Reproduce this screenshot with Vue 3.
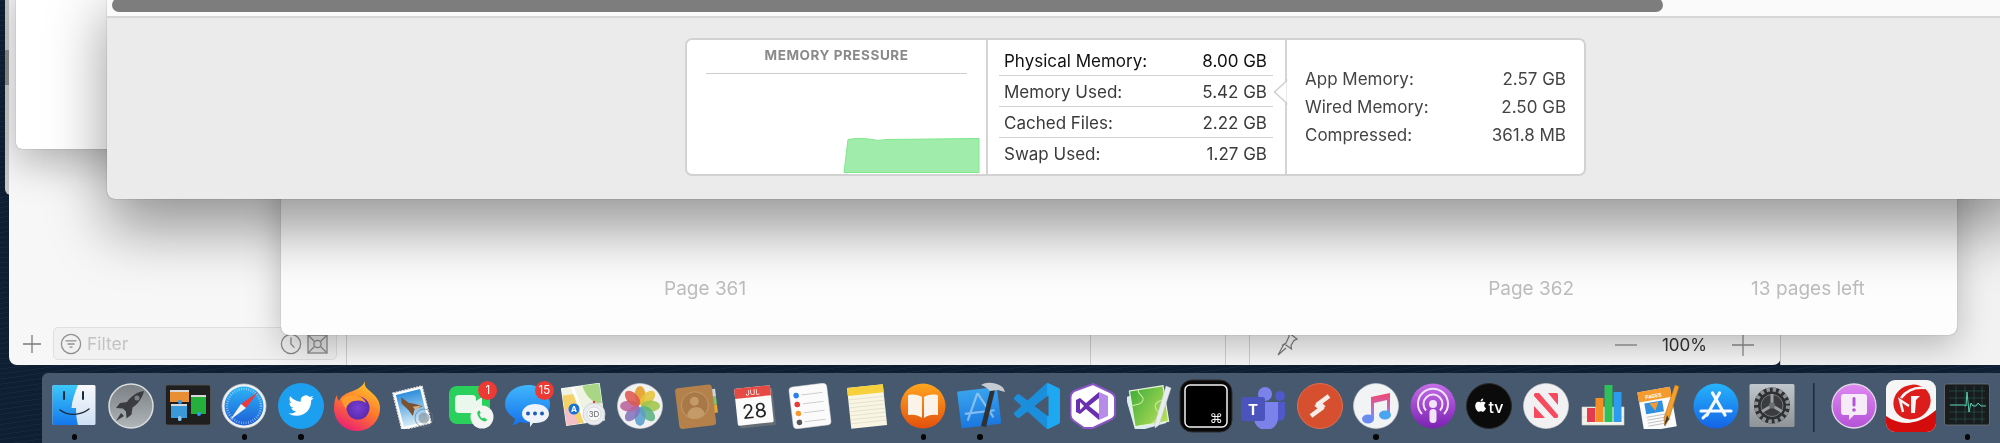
<script setup>
const physical = [
  { label: 'Physical Memory:', value: '8.00 GB', strong: true },
  { label: 'Memory Used:', value: '5.42 GB' },
  { label: 'Cached Files:', value: '2.22 GB' },
  { label: 'Swap Used:', value: '1.27 GB' }
];

const details = [
  { label: 'App Memory:', value: '2.57 GB' },
  { label: 'Wired Memory:', value: '2.50 GB' },
  { label: 'Compressed:', value: '361.8 MB' }
];

const photoPetals = [
  { angle: 0, color: '#f5a623' },
  { angle: 45, color: '#f4d03f' },
  { angle: 90, color: '#a8d24f' },
  { angle: 135, color: '#62bd8c' },
  { angle: 180, color: '#5fa8d8' },
  { angle: 225, color: '#8b7cc8' },
  { angle: 270, color: '#c56aa6' },
  { angle: 315, color: '#ea5f55' }
];
</script>

<template>
  <div class="desktop">
    <div class="win-far"></div>

    <!-- document window at the back -->
    <div class="win-main">
      <div class="main-footer">
        <div class="col col-side">
          <svg class="plus" width="18" height="18" viewBox="0 0 18 18"><path d="M9 0v18M0 9h18" stroke="#7c7c7c" stroke-width="1.3" fill="none"/></svg>
          <div class="filter">
            <svg width="22" height="22" viewBox="0 0 22 22" fill="none" stroke="#8e8e8e" stroke-width="1.3">
              <circle cx="11" cy="11" r="9.6"/>
              <path d="M5.5 7.8h11M7.5 11h7M9.5 14.2h3"/>
            </svg>
            <span class="filter-text">Filter</span>
            <svg class="filter-clock" width="22" height="22" viewBox="0 0 22 22" fill="none" stroke="#8a8a8a" stroke-width="1.3">
              <circle cx="11" cy="11" r="9.6"/>
              <path d="M11 4.5V11l3.4 3.6"/>
            </svg>
            <svg width="21" height="20" viewBox="0 0 21 20" fill="none" stroke="#8a8a8a" stroke-width="1.3">
              <rect x="1" y="1" width="19" height="18" fill="#e2e2e2"/>
              <circle cx="10.5" cy="10" r="3.6"/>
              <path d="M1 1l6.500 6.500M20 1l-6.500 6.500M1 19l6.500-6.500M20 19l-6.500-6.500"/>
            </svg>
          </div>
        </div>
        <div class="col col-a"></div>
        <div class="col col-b"></div>
        <div class="col col-c"></div>
        <div class="col col-d">
          <svg width="22" height="24" viewBox="0 0 22 24" fill="none" stroke="#7a7a7a" stroke-width="1.2">
            <path d="M13 1l8 6-3 1.500-3 5 .5 3.500-7-5-2.500 1.500 4-2.500 2.500-5.500L13 5z"/>
            <path d="M8 12l-6 11 8-7"/>
          </svg>
          <div class="zoom-tools">
            <svg width="22" height="22" viewBox="0 0 22 22"><path d="M0 11h22" stroke="#8a8a8a" stroke-width="1.3"/></svg>
            <span class="zoom-value">100%</span>
            <svg width="22" height="22" viewBox="0 0 22 22"><path d="M0 11h22M11 0v22" stroke="#8a8a8a" stroke-width="1.3" fill="none"/></svg>
          </div>
        </div>
      </div>
    </div>
    <div class="win-right"></div>

    <div class="win-small"></div>

    <!-- preview pages -->
    <div class="win-pages">
      <span class="page-label">Page 361</span>
      <span class="page-label page-two">Page 362</span>
      <span class="page-label page-left">13 pages left</span>
    </div>

    <!-- activity monitor -->
    <div class="win-front">
      <div class="scroll-track"><div class="scroll-thumb"></div></div>
      <div class="mem-panel">
        <div class="pressure">
          <div class="pressure-title">MEMORY PRESSURE</div>
          <svg class="pressure-graph" width="137" height="37" viewBox="0 0 137 37">
            <path d="M1 35.500L5 2.500Q15 .5 26 2q8 2.500 18 .5L136 1.500v34z" fill="#a0edab" stroke="#80e68d" stroke-width="1"/>
          </svg>
        </div>
        <div class="stats">
          <div v-for="row in physical" :key="row.label" class="stat-row" :class="{ strong: row.strong }">
            <span>{{ row.label }}</span>
            <span>{{ row.value }}</span>
          </div>
        </div>
        <div class="detail">
          <svg class="detail-arrow" width="15" height="26" viewBox="0 0 15 26">
            <path d="M13.500 0v2L1.500 13l12 11v2" fill="#fff" stroke="#cfcfcf" stroke-width="1.500"/>
          </svg>
          <div v-for="row in details" :key="row.label" class="detail-row">
            <span>{{ row.label }}</span>
            <span>{{ row.value }}</span>
          </div>
        </div>
      </div>
    </div>

    <!-- dock -->
    <div class="dock">
      <div class="dock-item running">
        <svg width="46" height="46" viewBox="0 0 46 46">
          <defs>
            <linearGradient id="finderL" x1="0" y1="0" x2="0" y2="1"><stop offset="0" stop-color="#3cc8fa"/><stop offset="1" stop-color="#1478ec"/></linearGradient>
            <linearGradient id="finderR" x1="0" y1="0" x2="0" y2="1"><stop offset="0" stop-color="#f8f9fb"/><stop offset="1" stop-color="#cfe0f3"/></linearGradient>
          </defs>
          <rect x="1.500" y="2" width="43" height="40" rx="1.500" fill="url(#finderR)"/>
          <path d="M3 2h24c-3 8-6 15-6.500 23H25c0 6 .5 12 2 17H3a1.500 1.500 0 0 1-1.500-1.500v-37A1.500 1.500 0 0 1 3 2z" fill="url(#finderL)"/>
          <path d="M13 9v7M32 9v7" stroke="#1c2b3a" stroke-width="2" stroke-linecap="round"/>
          <path d="M9 27c8 6 20 6 29-1" fill="none" stroke="#1c2b3a" stroke-width="1.400" stroke-linecap="round"/>
        </svg>
        <i class="dot"></i>
      </div>

      <div class="dock-item">
        <svg width="46" height="46" viewBox="0 0 46 46">
          <defs><linearGradient id="rocketBg" x1="0" y1="0" x2="0" y2="1"><stop offset="0" stop-color="#7a7f84"/><stop offset="1" stop-color="#b0b5b8"/></linearGradient></defs>
          <circle cx="23" cy="23" r="22" fill="url(#rocketBg)" stroke="#d9dcde" stroke-width="1.500"/>
          <path d="M36 8c-7 1-13 5-17 11l-7 1-4 5 7 .5 3 3 .5 7 5-4 1-7c6-4 10-10 11.500-16.500z" fill="#3a3c3f"/>
          <path d="M13 30l-5 8 8-5z" fill="#3a3c3f"/>
          <circle cx="29" cy="15" r="2.500" fill="#7d8185"/>
        </svg>
        <i class="dot off"></i>
      </div>

      <div class="dock-item">
        <svg width="46" height="46" viewBox="0 0 46 46">
          <rect x=".5" y="2" width="45" height="40" rx="2" fill="#1f1f1f" stroke="#555" stroke-width=".8"/>
          <rect x="5" y="8" width="19" height="11" fill="#e88e35"/><rect x="5" y="7" width="19" height="2" fill="#d8d8d8"/>
          <rect x="6" y="22" width="16" height="13" fill="#3a9ad9"/><rect x="6" y="21" width="16" height="2" fill="#d8d8d8"/>
          <rect x="26" y="13" width="15" height="18" fill="#25b03c"/><rect x="26" y="12" width="15" height="2" fill="#d8d8d8"/>
          <circle cx="15" cy="19" r="2" fill="#2e9bf0"/><rect x="13" y="33" width="3.500" height="5" rx="1.500" fill="#8cc4ee"/><circle cx="34" cy="31" r="2" fill="#2e9bf0"/>
        </svg>
        <i class="dot off"></i>
      </div>

      <div class="dock-item running">
        <svg width="46" height="46" viewBox="0 0 46 46">
          <defs><linearGradient id="safariBg" x1="0" y1="0" x2="0" y2="1"><stop offset="0" stop-color="#2cb3f5"/><stop offset="1" stop-color="#1d5fd8"/></linearGradient></defs>
          <circle cx="23" cy="23" r="22" fill="#eef0f2" stroke="#cfd2d5" stroke-width=".8"/>
          <circle cx="23" cy="23" r="19.500" fill="url(#safariBg)"/>
          <circle cx="23" cy="23" r="17" fill="none" stroke="#cfe6fa" stroke-width="2.500" stroke-dasharray="0.7 1.700" opacity=".75"/>
          <path d="M37 9L20 21l5 4z" fill="#ee3a3a"/>
          <path d="M9 37l11-16 5 4z" fill="#f2f2f2"/>
        </svg>
        <i class="dot"></i>
      </div>

      <div class="dock-item running">
        <svg width="46" height="46" viewBox="0 0 46 46">
          <circle cx="23" cy="23" r="23" fill="#1d9ff0"/>
          <g transform="translate(10.500 10) scale(1.050)" fill="#fff">
            <path d="M23.953 4.570a10 10 0 01-2.825.775 4.958 4.958 0 002.163-2.723c-.951.555-2.005.959-3.127 1.184a4.920 4.920 0 00-8.384 4.482C7.690 8.095 4.067 6.130 1.640 3.162a4.822 4.822 0 00-.666 2.475c0 1.710.870 3.213 2.188 4.096a4.904 4.904 0 01-2.228-.616v.060a4.923 4.923 0 003.946 4.827 4.996 4.996 0 01-2.212.085 4.936 4.936 0 004.604 3.417 9.867 9.867 0 01-6.102 2.105c-.390 0-.779-.023-1.170-.067a13.995 13.995 0 007.557 2.209c9.053 0 13.998-7.496 13.998-13.985 0-.210 0-.420-.015-.630A9.935 9.935 0 0024 4.590z"/>
          </g>
        </svg>
        <i class="dot"></i>
      </div>

      <div class="dock-item">
        <svg width="46" height="46" viewBox="0 0 46 46" style="overflow:visible">
          <defs>
            <linearGradient id="foxBg" x1=".8" y1="0" x2=".3" y2="1"><stop offset="0" stop-color="#ffd02e"/><stop offset=".5" stop-color="#ff7a2a"/><stop offset="1" stop-color="#ea1f74"/></linearGradient>
            <radialGradient id="foxCore"><stop offset="0" stop-color="#7b3fd0"/><stop offset="1" stop-color="#5a2bb0"/></radialGradient>
          </defs>
          <path d="M31-2c-1 5 1 7 6 11 6 5 9 10 9 16 0 13-10 23-23 23S0 38 0 25C0 20 1 15 3 12c0 3 1 5 2 6 2-5 6-7 11-9 6-2 13-5 15-11z" fill="url(#foxBg)"/>
          <circle cx="24" cy="25" r="11.500" fill="url(#foxCore)"/>
          <path d="M7 16c5-4 11-5 17-3 4 1 7 4 8 7-4-3-8-3-12-2-4 1-7 4-8 8-2-3-4-6-5-10z" fill="#ff9a2e"/>
        </svg>
        <i class="dot off"></i>
      </div>

      <div class="dock-item">
        <svg width="46" height="46" viewBox="0 0 46 46">
          <defs><linearGradient id="sky" x1="0" y1="0" x2="0" y2="1"><stop offset="0" stop-color="#2f8fdc"/><stop offset="1" stop-color="#d6ebf5"/></linearGradient></defs>
          <g transform="rotate(-14 21 25)">
            <rect x="6" y="6" width="30" height="38" fill="#fff" stroke="#e6e6e6" stroke-width="1.500" stroke-dasharray="2 1"/>
            <rect x="8.500" y="8.500" width="25" height="33" fill="url(#sky)"/>
            <path d="M13 12l6 7 6 3 7 4-9 1-3 6-3-7-5-8z" fill="#7a5232"/>
            <path d="M22 24l9 1-7 3z" fill="#d7b082"/>
          </g>
          <circle cx="33" cy="35" r="9" fill="none" stroke="#6a7480" stroke-width=".8" opacity=".8"/>
          <circle cx="33" cy="35" r="5.500" fill="#7f8a95" opacity=".6"/>
        </svg>
        <i class="dot off"></i>
      </div>

      <div class="dock-item">
        <svg width="46" height="46" viewBox="0 0 46 46">
          <rect x="1" y="3" width="41" height="38" rx="8" fill="#2ad05c"/>
          <rect x="7" y="12" width="21" height="18" rx="4" fill="#e9f7ed"/>
          <path d="M28 18l6-4v14l-6-4z" fill="#e9f7ed"/>
          <circle cx="34" cy="34" r="11.500" fill="#f3f5f3"/>
          <path d="M30 28c-1 1-1 3 0 5 1.500 3 4 5 6.500 5.500 1.500 0 2.500-1 2.500-2l-3-2-1.500 1c-1.500-1-2.500-2.500-3-4l1.200-1.500-1-2.500z" fill="#2ad05c"/>
        </svg>
        <span class="badge">1</span>
        <i class="dot off"></i>
      </div>

      <div class="dock-item">
        <svg width="46" height="46" viewBox="0 0 46 46">
          <defs><linearGradient id="msgBg" x1="0" y1="0" x2="0" y2="1"><stop offset="0" stop-color="#3fb6fb"/><stop offset="1" stop-color="#1673ee"/></linearGradient></defs>
          <path d="M24 2c12 0 22 8 22 19 0 11-10 19-22 19-3 0-6-.5-8-1.500-2 2-5 3.500-8 3.500 2-1.500 3-4 3-6.500C5 32 1 27 1 21 1 10 12 2 24 2z" fill="url(#msgBg)"/>
          <path d="M31 21c8 0 14 4 14 10 0 5-6 9-13 9l-3 0-3 4v-5c-4-1-8-4-8-8 0-6 6-10 13-10z" fill="#eef3f9"/>
          <circle cx="24" cy="30.500" r="2" fill="#1d5bb8"/><circle cx="31" cy="30.500" r="2" fill="#1d5bb8"/><circle cx="38" cy="30.500" r="2" fill="#1d5bb8"/>
        </svg>
        <span class="badge">15</span>
        <i class="dot off"></i>
      </div>

      <div class="dock-item">
        <svg width="46" height="46" viewBox="0 0 46 46">
          <g transform="rotate(-8 21 22)">
            <rect x="3" y="3" width="38" height="37" fill="#eff4e2" stroke="#f8f8f8" stroke-width="1.200"/>
            <path d="M3 10h12l6 30H3z" fill="#f5d16a"/>
            <path d="M3 24h8l4 16H3z" fill="#f3c0c8"/>
            <path d="M24 3h17v20c-8 0-15-8-17-20z" fill="#a9d684"/>
            <path d="M14 3l8 37" stroke="#fff" stroke-width="3"/>
          </g>
          <circle cx="13" cy="26" r="5.500" fill="#1671d8"/>
          <text x="13" y="29" text-anchor="middle" class="map-a">A</text>
          <circle cx="33" cy="31" r="11" fill="#eaecef" stroke="#c8ccd1" stroke-width=".8"/>
          <circle cx="33" cy="31" r="7" fill="#f7f8f9" stroke="#bbb" stroke-width=".4"/>
          <text x="33" y="34" text-anchor="middle" class="map-3d">3D</text>
          <circle cx="33" cy="19" r="1.200" fill="#e63a3a"/>
        </svg>
        <i class="dot off"></i>
      </div>

      <div class="dock-item">
        <svg width="46" height="46" viewBox="0 0 46 46">
          <circle cx="23" cy="23" r="22.500" fill="#f1f1f1" stroke="#d8d8d8" stroke-width=".6"/>
          <g style="mix-blend-mode:multiply">
            <ellipse v-for="petal in photoPetals" :key="petal.angle" cx="23" cy="12.500" rx="5.500" ry="9.500" :fill="petal.color" opacity=".88" :transform="`rotate(${petal.angle} 23 23)`"/>
          </g>
        </svg>
        <i class="dot off"></i>
      </div>

      <div class="dock-item">
        <svg width="46" height="46" viewBox="0 0 46 46">
          <g transform="rotate(-7 23 23)">
            <rect x="39" y="8" width="4" height="8" fill="#d0d6da"/><rect x="39" y="16" width="4" height="8" fill="#7fc36a"/><rect x="39" y="24" width="4" height="8" fill="#e8a635"/>
            <rect x="3" y="3" width="37" height="41" rx="3" fill="#b4814a"/>
            <circle cx="21" cy="22" r="13.500" fill="#a87846" stroke="#c49a69" stroke-width=".9"/>
            <circle cx="21" cy="18" r="4.500" fill="#c49a69"/>
            <path d="M12 32c1-6 5-8 9-8s8 2 9 8a13 13 0 0 1-18 0z" fill="#c49a69"/>
          </g>
        </svg>
        <i class="dot off"></i>
      </div>

      <div class="dock-item">
        <svg width="46" height="46" viewBox="0 0 46 46">
          <g transform="rotate(-6 23 23)">
            <rect x="7" y="7" width="36" height="37" rx="1.500" fill="#666e75"/>
            <rect x="5" y="4" width="36" height="37" rx="1.500" fill="#fbfbfb"/>
            <path d="M5 5.500A1.500 1.500 0 0 1 6.500 4h33A1.500 1.500 0 0 1 41 5.500V14H5z" fill="#e64a45"/>
            <text x="23" y="12" text-anchor="middle" class="cal-month">JUL</text>
            <text x="23" y="35" text-anchor="middle" class="cal-day">28</text>
          </g>
        </svg>
        <i class="dot off"></i>
      </div>

      <div class="dock-item">
        <svg width="46" height="46" viewBox="0 0 46 46">
          <g transform="rotate(-7 23 23)">
            <rect x="4" y="2" width="38" height="42" rx="4" fill="#fbfbfb" stroke="#d5d5d5" stroke-width=".5"/>
            <circle cx="10.500" cy="11" r="2.800" fill="#2e7fe8"/><circle cx="10.500" cy="20" r="2.800" fill="#e93a36"/><circle cx="10.500" cy="29" r="2.800" fill="#f6992b"/><circle cx="10.500" cy="38" r="2.800" fill="#55595e"/>
            <path d="M16 11h21M16 20h21M16 29h21M16 38h21" stroke="#bdbdbd" stroke-width=".7"/>
          </g>
        </svg>
        <i class="dot off"></i>
      </div>

      <div class="dock-item">
        <svg width="46" height="46" viewBox="0 0 46 46">
          <g transform="rotate(-6 23 23)">
            <rect x="5" y="3" width="36" height="41" fill="#f9f5e3"/>
            <rect x="5" y="3" width="36" height="8" fill="#f6d13c"/>
            <path d="M5 15h36M5 19h36M5 23h36M5 27h36M5 31h36M5 35h36M5 39h36" stroke="#d9d5c4" stroke-width=".6"/>
          </g>
        </svg>
        <i class="dot off"></i>
      </div>

      <div class="dock-item running">
        <svg width="46" height="46" viewBox="0 0 46 46">
          <defs><linearGradient id="booksBg" x1="0" y1="0" x2="0" y2="1"><stop offset="0" stop-color="#ffa51f"/><stop offset="1" stop-color="#e3500e"/></linearGradient></defs>
          <circle cx="23" cy="23" r="22.500" fill="url(#booksBg)"/>
          <path d="M22 14c-3-2-8-3-13-2-.5 0-1 .5-1 1v18c0 1 .5 1 1 1 5-.5 9 0 13 3zM24 14c3-2 8-3 13-2 .5 0 1 .5 1 1v18c0 1-.5 1-1 1-5-.5-9 0-13 3z" fill="#fbf3e9"/>
        </svg>
        <i class="dot"></i>
      </div>

      <div class="dock-item running">
        <svg width="46" height="46" viewBox="0 0 46 46" style="overflow:visible">
          <defs><linearGradient id="xcodeBg" x1="0" y1="0" x2="0" y2="1"><stop offset="0" stop-color="#39a3ee"/><stop offset="1" stop-color="#1a78df"/></linearGradient></defs>
          <g transform="rotate(-7 23 23)">
            <rect x="2" y="6" width="40" height="37" rx="1" fill="url(#xcodeBg)"/>
            <path d="M22 10L9 36M22 10l13 26M7 29h30" fill="none" stroke="#a7d3f7" stroke-width="2.200" opacity=".7"/>
          </g>
          <path d="M34 4l-10 39 5 1 9-37z" fill="#2e3236"/>
          <path d="M24 2c5-3 13-3 20 1 2 1 3 3 4 6l-7-2-8 1-2-2c-2-2-4-3-7-4z" fill="#c5cbd1"/>
        </svg>
        <i class="dot"></i>
      </div>

      <div class="dock-item">
        <svg width="46" height="46" viewBox="0 0 24 24">
          <path d="M23.150 2.587L18.210.21a1.494 1.494 0 0 0-1.705.29l-9.460 8.630-4.120-3.128a.999.999 0 0 0-1.276.057L.327 7.261A1 1 0 0 0 .326 8.740L3.899 12 .326 15.260a1 1 0 0 0 .001 1.479L1.650 17.940a.999.999 0 0 0 1.276.057l4.120-3.128 9.460 8.630a1.492 1.492 0 0 0 1.704.290l4.942-2.377A1.500 1.500 0 0 0 24 20.060V3.939a1.500 1.500 0 0 0-.850-1.352zm-5.146 14.861L10.826 12l7.178-5.448v10.896z" fill="#1c8fdc"/>
          <path d="M17.300 .15a1.500 1.500 0 0 1 .910.060l4.940 2.377A1.500 1.500 0 0 1 24 3.939v16.120a1.500 1.500 0 0 1-.850 1.352l-4.940 2.377a1.500 1.500 0 0 1-.910.060z M18 17.450V6.550" fill="#1fa8f2"/>
          <path d="M18.004 6.552v10.896L10.826 12z" fill="#47596f"/>
        </svg>
        <i class="dot off"></i>
      </div>

      <div class="dock-item">
        <svg width="46" height="46" viewBox="0 0 46 46">
          <path d="M23 1l17 8c3 1.500 5 3 5 6v16c0 3-2 4.500-5 6l-17 8H14L4 38c-2-1.500-3.500-3-3.500-6V14c0-3 1.500-4.500 3.500-6z" fill="#fff" stroke="#8a55c4" stroke-width="2"/>
          <path d="M29 9l9 4v20l-9 4z" fill="#b78ce8"/>
          <path d="M29 9v28l-13-11-6 5-4-2V17l4-2 6 5z" fill="#6a2fb0"/>
          <path d="M29 15v16l-10-8zM10 19v8l4-4z" fill="#fff"/>
        </svg>
        <i class="dot off"></i>
      </div>

      <div class="dock-item">
        <svg width="46" height="46" viewBox="0 0 46 46">
          <defs><linearGradient id="codaBg" x1="0" y1="0" x2="1" y2="1"><stop offset="0" stop-color="#3fae3a"/><stop offset="1" stop-color="#bde05a"/></linearGradient></defs>
          <rect x="3" y="9" width="32" height="36" fill="#dcecf2" transform="rotate(-16 19 27)"/>
          <g transform="rotate(-9 23 23)">
            <rect x="5" y="5" width="34" height="36" fill="url(#codaBg)" stroke="#e9f3d7" stroke-width="1.200"/>
            <path d="M14 5c-2 5 5 6 3 11s-9 3-12 4M39 20c-6-2-11 1-11 5s5 6 2 10-6 3-8 6" fill="none" stroke="#d0eb9d" stroke-width="1"/>
          </g>
          <path d="M39 3l5 2-12 37-4 3 0-5z" fill="#e8ecee" stroke="#c4c9cc" stroke-width=".5"/>
        </svg>
        <i class="dot off"></i>
      </div>

      <div class="dock-item">
        <svg width="54" height="54" viewBox="0 0 54 54" style="margin:-4px">
          <rect x="1" y="1" width="52" height="52" rx="12" fill="#080808" stroke="#2f2f2f"/>
          <rect x="6" y="6" width="42" height="42" rx="5" fill="#000" stroke="#f3f3f3" stroke-width="1.500"/>
          <text x="37" y="44" text-anchor="middle" class="key-cmd">⌘</text>
        </svg>
        <i class="dot off"></i>
      </div>

      <div class="dock-item">
        <svg width="46" height="46" viewBox="0 0 46 46">
          <circle cx="25" cy="11" r="7" fill="#7b83eb"/>
          <circle cx="40" cy="13" r="5" fill="#5059c9"/>
          <path d="M33 19h12v13a6 6 0 0 1-12 0z" fill="#5059c9"/>
          <path d="M14 19h24v16a12 12 0 0 1-24 0z" fill="#7b83eb"/>
          <rect x="1" y="14" width="24" height="24" rx="2.500" fill="#4b53bc"/>
          <text x="13" y="32" text-anchor="middle" class="teams-t">T</text>
        </svg>
        <i class="dot off"></i>
      </div>

      <div class="dock-item">
        <svg width="46" height="46" viewBox="0 0 46 46" fill="none">
          <circle cx="23" cy="23" r="22.500" fill="#d6502f" stroke="#e16d4e" stroke-width="1"/>
          <path d="M32 13l-10 7.500 5 4.500" stroke="#f6ece8" stroke-width="4.500"/>
          <path d="M14 33l10-7.500-5-4.500" stroke="#f6ece8" stroke-width="4.500"/>
        </svg>
        <i class="dot off"></i>
      </div>

      <div class="dock-item running">
        <svg width="46" height="46" viewBox="0 0 46 46">
          <defs><linearGradient id="noteG" x1="0" y1="0" x2="0" y2="1"><stop offset="0" stop-color="#f4456a"/><stop offset=".6" stop-color="#c16bc8"/><stop offset="1" stop-color="#5a9df5"/></linearGradient></defs>
          <circle cx="23" cy="23" r="22.500" fill="#f2f3f5" stroke="#d4d5d9" stroke-width=".6"/>
          <path d="M18 14l19-4v22h-3V17l-13 3v16h-3z" fill="url(#noteG)"/>
          <ellipse cx="15" cy="36" rx="6" ry="4.500" fill="#6a8cf0"/>
          <ellipse cx="32" cy="32" rx="6" ry="4.500" fill="#4aa5f0"/>
        </svg>
        <i class="dot"></i>
      </div>

      <div class="dock-item">
        <svg width="46" height="46" viewBox="0 0 46 46" fill="none">
          <defs><linearGradient id="podBg" x1="0" y1="0" x2="0" y2="1"><stop offset="0" stop-color="#c46ee8"/><stop offset="1" stop-color="#7b22b2"/></linearGradient></defs>
          <circle cx="23" cy="23" r="22.500" fill="url(#podBg)"/>
          <path d="M12 31a15 15 0 1 1 22 0" stroke="#f3e3f9" stroke-width="2"/>
          <path d="M16 27.500a9.500 9.500 0 1 1 14 0" stroke="#f3e3f9" stroke-width="2"/>
          <circle cx="23" cy="21" r="4" fill="#f3e3f9"/>
          <rect x="19.500" y="26" width="7" height="14" rx="3.500" fill="#f3e3f9"/>
        </svg>
        <i class="dot off"></i>
      </div>

      <div class="dock-item">
        <svg width="46" height="46" viewBox="0 0 46 46">
          <circle cx="23" cy="23" r="22.500" fill="#0b0b0b" stroke="#2a2a2a"/>
          <g transform="translate(8 15.500) scale(.55)" fill="#fff">
            <path d="M12.152 6.896c-.948 0-2.415-1.078-3.960-1.040-2.040.027-3.910 1.183-4.961 3.014-2.117 3.675-.546 9.103 1.519 12.090 1.013 1.454 2.208 3.090 3.792 3.039 1.520-.065 2.090-.987 3.935-.987 1.831 0 2.350.987 3.960.948 1.637-.026 2.676-1.480 3.676-2.948 1.156-1.688 1.636-3.325 1.662-3.415-.039-.013-3.182-1.221-3.220-4.857-.026-3.040 2.480-4.494 2.597-4.559-1.429-2.090-3.623-2.324-4.390-2.376-2-.156-3.675 1.090-4.610 1.090zM15.530 3.830c.843-1.012 1.400-2.427 1.245-3.830-1.207.052-2.662.805-3.532 1.818-.780.896-1.454 2.338-1.273 3.714 1.338.104 2.715-.688 3.559-1.701"/>
          </g>
          <text x="30" y="29.500" text-anchor="middle" class="tv-text">tv</text>
        </svg>
        <i class="dot off"></i>
      </div>

      <div class="dock-item">
        <svg width="46" height="46" viewBox="0 0 46 46">
          <circle cx="23" cy="23" r="22.500" fill="#f1f1f3" stroke="#d8d8da" stroke-width=".6"/>
          <rect x="11" y="10" width="24" height="25" rx="1.500" fill="#f64a5e"/>
          <path d="M11 13l20 22h-9L11 23zM16 10h9l10 12v10z" fill="#f1f1f3"/>
        </svg>
        <i class="dot off"></i>
      </div>

      <div class="dock-item">
        <svg width="46" height="46" viewBox="0 0 46 46">
          <path d="M2 24h42v18H2z" fill="#f2f1ea" stroke="#d2d2ca" stroke-width=".6"/>
          <path d="M2 34h42M9 24v18" stroke="#c9c9c2" stroke-width=".5"/>
          <rect x="7" y="25" width="8" height="14" fill="#e83a4f"/>
          <rect x="15.500" y="15" width="8" height="24" fill="#f58d25"/>
          <rect x="24.500" y="2" width="8" height="37" fill="#2fc05a"/>
          <rect x="33.500" y="9" width="8" height="30" fill="#2b9cf0"/>
        </svg>
        <i class="dot off"></i>
      </div>

      <div class="dock-item">
        <svg width="46" height="46" viewBox="0 0 46 46">
          <g transform="rotate(-10 23 23)">
            <rect x="4" y="6" width="33" height="40" fill="#fbfbfb"/>
            <rect x="4" y="6" width="33" height="10" fill="#f59a2c"/>
            <text x="11" y="14" class="pages-text">PAGES</text>
            <rect x="9" y="18" width="18" height="11" fill="#2f8fe0"/>
            <path d="M14 19h9l-4.500 8z" fill="#f59a2c"/>
            <path d="M9 32h23M9 35h23M9 38h23M9 41h16" stroke="#b9b9b9" stroke-width=".8"/>
          </g>
          <path d="M39 2l4 1.500L33 36l-4 7-1-8z" fill="#f3a02f" stroke="#b26f14" stroke-width=".6"/>
          <path d="M31 32l-3 11 5-7z" fill="#3c3c3c"/>
        </svg>
        <i class="dot off"></i>
      </div>

      <div class="dock-item">
        <svg width="46" height="46" viewBox="0 0 46 46">
          <defs><linearGradient id="storeBg" x1="0" y1="0" x2="0" y2="1"><stop offset="0" stop-color="#26b4fb"/><stop offset="1" stop-color="#1463e6"/></linearGradient></defs>
          <circle cx="23" cy="23" r="22.500" fill="url(#storeBg)"/>
          <path d="M26.500 10L14 32M19.500 10L32 32M8 28h30" stroke="#f5f9ff" stroke-width="3.200" stroke-linecap="round" fill="none"/>
          <path d="M10 35l3-3" stroke="#f5f9ff" stroke-width="3" stroke-linecap="round"/>
        </svg>
        <i class="dot off"></i>
      </div>

      <div class="dock-item">
        <svg width="46" height="46" viewBox="0 0 46 46" fill="none">
          <defs><linearGradient id="prefBg" x1="0" y1="0" x2="0" y2="1"><stop offset="0" stop-color="#c0c7cc"/><stop offset="1" stop-color="#8e9498"/></linearGradient></defs>
          <rect x=".5" y="1" width="45" height="43" rx="1.500" fill="url(#prefBg)"/>
          <circle cx="23" cy="22.500" r="18" fill="#2e3033"/>
          <circle cx="23" cy="22.500" r="16" stroke="#8e9295" stroke-width="4" stroke-dasharray="3.500 2.800"/>
          <circle cx="23" cy="22.500" r="11" fill="#3a3c3f" stroke="#777" stroke-width="1"/>
          <path d="M23 22.500V11M23 22.500l-10 6M23 22.500l10 6" stroke="#9da0a3" stroke-width="3"/>
          <circle cx="23" cy="22.500" r="3" fill="#6d7073"/>
        </svg>
        <i class="dot off"></i>
      </div>

      <div class="dock-sep"></div>

      <div class="dock-item">
        <svg width="46" height="46" viewBox="0 0 46 46">
          <defs><linearGradient id="fbBg" x1="0" y1="0" x2="0" y2="1"><stop offset="0" stop-color="#de88f0"/><stop offset="1" stop-color="#b452d8"/></linearGradient></defs>
          <circle cx="23" cy="23" r="22" fill="url(#fbBg)" stroke="#ded6e3" stroke-width="1.300"/>
          <path d="M13 11h20a3 3 0 0 1 3 3v15a3 3 0 0 1-3 3H23l-5 5v-5h-5a3 3 0 0 1-3-3V14a3 3 0 0 1 3-3z" fill="#f6ecf9"/>
          <rect x="21.500" y="14" width="3" height="9.500" rx="1.500" fill="#b452d8"/>
          <circle cx="23" cy="27" r="1.800" fill="#b452d8"/>
        </svg>
        <i class="dot off"></i>
      </div>

      <div class="dock-item">
        <svg width="50" height="52" viewBox="0 0 50 52" style="margin:-3px -2px">
          <rect x="0" y="0" width="50" height="52" rx="9" fill="#f6f6f6"/>
          <path d="M0 36c14 10 32 10 50-6v13a9 9 0 0 1-9 9H9a9 9 0 0 1-9-9z" fill="#d40c0c"/>
          <ellipse cx="26" cy="22" rx="19" ry="17" fill="#dd1c1c" transform="rotate(-25 26 22)"/>
          <path d="M15 18c6-8 14-11 24-10M17 32l-3-12 9 6" fill="none" stroke="#f6f6f6" stroke-width="2.500"/>
          <path d="M25 16h9l-4 4-1 13h-4z" fill="#f6f6f6"/>
        </svg>
        <i class="dot off"></i>
      </div>

      <div class="dock-item running">
        <svg width="46" height="46" viewBox="0 0 46 46" fill="none">
          <rect x=".5" y="1" width="45" height="41" rx="2" fill="#181c1d" stroke="#6e7476" stroke-width=".8"/>
          <path d="M5 8h36M5 15h36M5 22h36M5 29h36M5 36h36M12 3v37M21 3v37M30 3v37M38 3v37" stroke="#2e6a60" stroke-width=".5"/>
          <path d="M6 22h14l2 1 1-14 2 20 2-9 2 3h3l2-3 3 3h5" stroke="#5fdcbe" stroke-width=".9"/>
        </svg>
        <i class="dot"></i>
      </div>

      <div class="dock-item dock-cut">
        <div class="cut-tile"></div>
      </div>
    </div>
  </div>
</template>

<style scoped>
.desktop {
  position: relative;
  width: 2000px;
  height: 443px;
  overflow: hidden;
  background:
    repeating-linear-gradient(172deg, rgba(120, 150, 185, 0.07) 0 1px, transparent 1px 5px),
    #0e1e33;
  font-family: Inter, "Liberation Sans", sans-serif;
}

/* windows on the desktop */
.win-far {
  position: absolute;
  left: 5px;
  top: -20px;
  width: 60px;
  height: 215px;
  border-radius: 6px;
  background: linear-gradient(#c9c9c9 0 70px, #8c8c8c 70px 105px, #c9c9c9 105px);
}

.win-main {
  position: absolute;
  left: 9px;
  top: -20px;
  width: 1772px;
  height: 385px;
  display: flex;
  flex-direction: column;
  justify-content: flex-end;
  background: #f7f7f7;
  border-radius: 8px;
}

.win-right {
  position: absolute;
  left: 1781px;
  top: -20px;
  right: 0;
  height: 385px;
  background: #f2f2f2;
}

.main-footer {
  display: flex;
  height: 43px;
}

.col {
  box-sizing: border-box;
  height: 100%;
}

.col-side {
  width: 337px;
  display: flex;
  align-items: center;
  padding: 5px 9px 5px 14px;
  gap: 12px;
}

.plus { flex: none; }

.filter {
  flex: 1;
  height: 33px;
  box-sizing: border-box;
  display: flex;
  align-items: center;
  padding: 0 8px 0 6px;
  border: 1.5px solid #dfdfdf;
  border-radius: 5px;
  background: #f1f1f1;
}

.filter-text {
  margin-left: 5px;
  font-size: 17.5px;
  color: #c3c3c3;
}

.filter-clock {
  margin-left: auto;
  margin-right: 5px;
}

.col-a,
.col-b,
.col-c,
.col-d {
  border-left: 1px solid #cfcfcf;
}

.col-a { width: 744px; }
.col-b { width: 135px; }
.col-c { width: 24px; }

.col-d {
  width: 532px;
  border-right: 1px solid #c8c8c8;
  display: flex;
  align-items: flex-end;
  padding: 0 26px 9px 26px;
}

.zoom-tools {
  margin-left: auto;
  display: flex;
  align-items: center;
  gap: 25px;
}

.zoom-value {
  font-size: 17px;
  color: #333;
}

.win-small {
  position: absolute;
  left: 16px;
  top: -20px;
  width: 200px;
  height: 169px;
  border-radius: 6px;
  background: #fff;
  box-shadow: 0 0 1px rgba(0, 0, 0, 0.5), 0 14px 40px rgba(0, 0, 0, 0.28);
}

.win-pages {
  position: absolute;
  left: 281px;
  top: -20px;
  width: 1676px;
  height: 355px;
  box-sizing: border-box;
  display: flex;
  align-items: flex-end;
  padding: 0 0 34px 383px;
  background: #fdfdfd;
  border-radius: 8px;
  box-shadow: 0 0 1px rgba(0, 0, 0, 0.45), 0 10px 34px rgba(0, 0, 0, 0.25);
}

.page-label {
  font-size: 19px;
  line-height: 24px;
  color: #bdbdbd;
}

.page-two { margin-left: 742px; }
.page-left { margin-left: 177px; }

.win-front {
  position: absolute;
  left: 107px;
  top: -20px;
  width: 1920px;
  height: 219px;
  border-radius: 8px;
  background: #ebebeb;
  box-shadow: 0 0 1px rgba(0, 0, 0, 0.6), 0 30px 60px rgba(0, 0, 0, 0.4);
}

.scroll-track {
  height: 38px;
  box-sizing: border-box;
  padding: 18px 0 0 5px;
  background: #fafafa;
  border-bottom: 2px solid #d6d6d6;
}

.scroll-thumb {
  width: 1551px;
  height: 14px;
  border-radius: 7px;
  background: #7d7d7d;
}

/* memory panel */
.mem-panel {
  display: flex;
  width: 901px;
  height: 138px;
  box-sizing: border-box;
  margin: 20px 0 0 578px;
  background: #fff;
  border: 2px solid #d2d2d2;
  border-radius: 7px;
}

.pressure {
  width: 299px;
  display: flex;
  flex-direction: column;
  border-right: 2px solid #d4d4d4;
}

.pressure-title {
  margin: 0 19px;
  padding: 7px 0 9px;
  border-bottom: 1.5px solid #cdcdcd;
  text-align: center;
  font-size: 13.5px;
  line-height: 17px;
  font-weight: 700;
  letter-spacing: 0.55px;
  color: #8a8a8a;
}

.pressure-graph {
  margin: auto 6px 0 auto;
}

.stats {
  width: 297px;
  box-sizing: border-box;
  padding: 5px 12px 0 11px;
}

.stat-row {
  display: flex;
  justify-content: space-between;
  height: 31px;
  box-sizing: border-box;
  align-items: center;
  padding: 1px 6px 0 5px;
  border-bottom: 1.5px solid #d2d2d2;
  font-size: 17px;
  color: #3a3a3a;
}

.stat-row:last-child { border-bottom: none; }
.stat-row.strong { color: #111; }

.detail {
  position: relative;
  flex: 1;
  display: flex;
  flex-direction: column;
  justify-content: center;
  gap: 0;
  padding: 0 18px 0 18px;
  border-left: 2px solid #d4d4d4;
}

.detail-row {
  display: flex;
  justify-content: space-between;
  align-items: center;
  height: 28px;
  font-size: 17px;
  color: #444;
}

.detail-arrow {
  position: absolute;
  left: -14px;
  top: 39px;
}

/* dock */
.dock {
  position: absolute;
  left: 42px;
  top: 373px;
  width: 2000px;
  height: 90px;
  display: flex;
  box-sizing: border-box;
  padding: 10px 0 0 4.2px;
  background: #47596f;
  border-top-left-radius: 6px;
}

.dock-item {
  position: relative;
  flex: none;
  width: 56.6px;
  display: flex;
  flex-direction: column;
  align-items: center;
}

.dock-item > svg { flex: none; }

.dot {
  width: 5.5px;
  height: 5.5px;
  margin-top: 5px;
  border-radius: 50%;
  background: #060606;
}

.dot.off { visibility: hidden; }

.dock-sep {
  flex: none;
  width: 25.4px;
  height: 49px;
  background: linear-gradient(#1b2b40, #1b2b40) center / 1.5px 100% no-repeat;
}

.cut-tile {
  width: 46px;
  height: 40px;
  margin: 2px 0 0 6px;
  background: #3173d8;
}

.badge {
  position: absolute;
  top: -2px;
  left: 36px;
  min-width: 19px;
  height: 19px;
  box-sizing: border-box;
  padding: 0 3px;
  border-radius: 10px;
  background: #ec3a35;
  color: #fff;
  font-size: 11.5px;
  line-height: 19px;
  text-align: center;
}

.map-a { font-size: 8px; font-weight: 700; fill: #fff; }
.map-3d { font-size: 8px; fill: #666; }
.cal-month { font-size: 7.5px; fill: #fff; }
.cal-day { font-size: 20px; fill: #222; }
.key-cmd { font-size: 13px; fill: #f3f3f3; font-family: "DejaVu Sans", sans-serif; }
.teams-t { font-size: 15px; font-weight: 700; fill: #fff; }
.tv-text { font-size: 16px; font-weight: 500; fill: #fff; }
.pages-text { font-size: 5px; font-weight: 700; fill: #fff; }
</style>
